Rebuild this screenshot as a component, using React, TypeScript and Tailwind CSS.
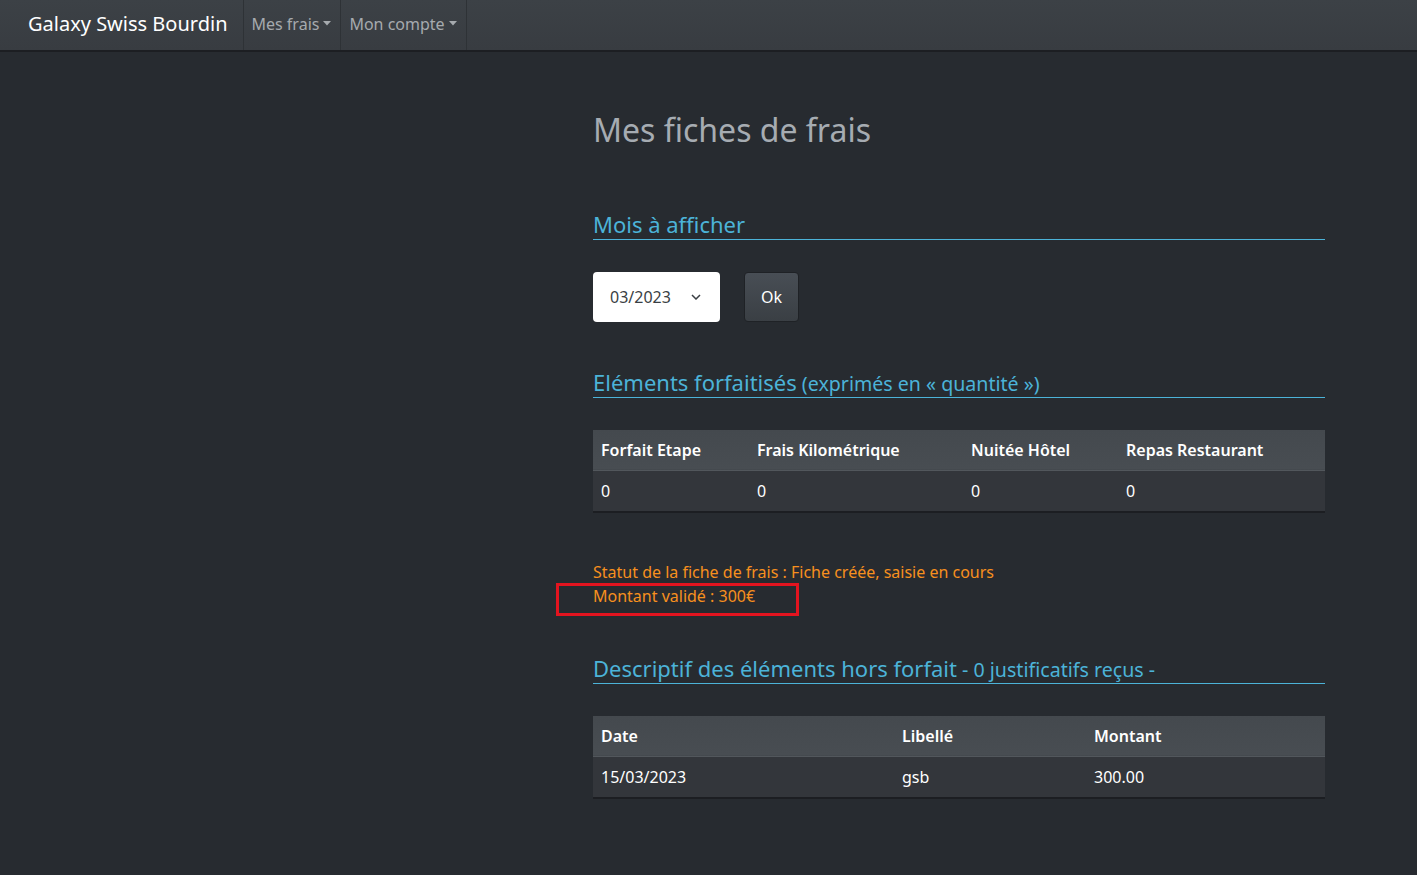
import React from "react";

function Caret() {
  return (
    <svg width="8" height="5" viewBox="0 0 8 5" className="ml-[4px] inline-block">
      <path d="M0 0 L8 0 L4 4.5 Z" fill="currentColor" />
    </svg>
  );
}

function SectionTitle({ main, sub }: { main: string; sub?: string }) {
  return (
    <div className="border-b border-[#4cb3d8] pb-[1px]">
      <h3 className="text-[22px] leading-[28px] text-[#4cb3d8]">
        {main}
        {sub && <span className="text-[19.6px] leading-[20px]"> {sub}</span>}
      </h3>
    </div>
  );
}

export default function App() {
  return (
    <div
      className="min-h-[875px] bg-[#272b30] text-[#c8c8c8]"
      style={{ fontFamily: '"Noto Sans", "Open Sans", sans-serif' }}
    >
      <nav className="flex h-[52px] items-stretch border-b-2 border-[#1c1e22] bg-gradient-to-b from-[#3c4146] to-[#383c41]">
        <div className="flex items-center pb-[3px] pl-[28px] pr-[15px] text-[20px] text-white">Galaxy Swiss Bourdin</div>
        <div className="flex border-l border-[#2e3236]">
          <div className="flex items-center border-r border-[#2e3236] pb-[3px] pl-[8px] pr-[9px] text-[16px] text-[#a6aaae]">
            Mes frais
            <Caret />
          </div>
          <div className="flex items-center border-r border-[#2e3236] pb-[3px] pl-[8px] pr-[9px] text-[16px] text-[#a6aaae]">
            Mon compte
            <Caret />
          </div>
        </div>
      </nav>

      <main className="flex">
        <div className="ml-[593px] w-[732px] pt-[58px]">
          <h2 className="text-[32px] leading-[40px] text-[#a6acb2]">Mes fiches de frais</h2>

          <div className="mt-[60px]">
            <SectionTitle main="Mois à afficher" />
          </div>

          <div className="mt-[32px] flex items-center gap-[24px]">
            <div className="flex h-[50px] w-[127px] items-center justify-between rounded-[4px] bg-white pl-[17px] pr-[19px] text-[16px] text-[#3a3f44]">
              <span>03/2023</span>
              <svg width="10" height="6" viewBox="0 0 10 6">
                <path d="M1 1 L5 5 L9 1" fill="none" stroke="#3a3f44" strokeWidth="1.5" />
              </svg>
            </div>
            <button className="flex h-[50px] w-[55px] items-center justify-center rounded-[4px] border border-[#1f2226] bg-gradient-to-b from-[#484e55] to-[#3a3f44] text-[16px] text-white">
              Ok
            </button>
          </div>

          <div className="mt-[46px]">
            <SectionTitle main="Eléments forfaitisés" sub="(exprimés en « quantité »)" />
          </div>

          <table className="mt-[32px] w-full border-collapse text-[16px] text-white">
            <thead>
              <tr className="h-[40px] border-b border-[#52575c] bg-gradient-to-b from-[#44494e] to-[#484d52] text-left">
                <th className="w-[156px] px-[8px] font-semibold">Forfait Etape</th>
                <th className="w-[214px] px-[8px] font-semibold">Frais Kilométrique</th>
                <th className="w-[155px] px-[8px] font-semibold">Nuitée Hôtel</th>
                <th className="px-[8px] font-semibold">Repas Restaurant</th>
              </tr>
            </thead>
            <tbody>
              <tr className="h-[42px] border-b-2 border-[#1c1e22] bg-[#33363b]">
                <td className="px-[8px]">0</td>
                <td className="px-[8px]">0</td>
                <td className="px-[8px]">0</td>
                <td className="px-[8px]">0</td>
              </tr>
            </tbody>
          </table>

          <div className="relative mt-[47px] text-[16px] leading-[24px] text-[#f7901e]">
            <div>Statut de la fiche de frais : Fiche créée, saisie en cours</div>
            <div>Montant validé : 300€</div>
            <div className="pointer-events-none absolute left-[-37px] top-[23px] h-[33px] w-[243px] border-[3px] border-[#e3141f]" />
          </div>

          <div className="mt-[46px]">
            <SectionTitle main="Descriptif des éléments hors forfait" sub="- 0 justificatifs reçus -" />
          </div>

          <table className="mt-[32px] w-full border-collapse text-[16px] text-white">
            <thead>
              <tr className="h-[40px] border-b border-[#52575c] bg-gradient-to-b from-[#44494e] to-[#484d52] text-left">
                <th className="w-[301px] px-[8px] font-semibold">Date</th>
                <th className="w-[192px] px-[8px] font-semibold">Libellé</th>
                <th className="px-[8px] font-semibold">Montant</th>
              </tr>
            </thead>
            <tbody>
              <tr className="h-[42px] border-b-2 border-[#1c1e22] bg-[#33363b]">
                <td className="px-[8px]">15/03/2023</td>
                <td className="px-[8px]">gsb</td>
                <td className="px-[8px]">300.00</td>
              </tr>
            </tbody>
          </table>
        </div>
      </main>
    </div>
  );
}
